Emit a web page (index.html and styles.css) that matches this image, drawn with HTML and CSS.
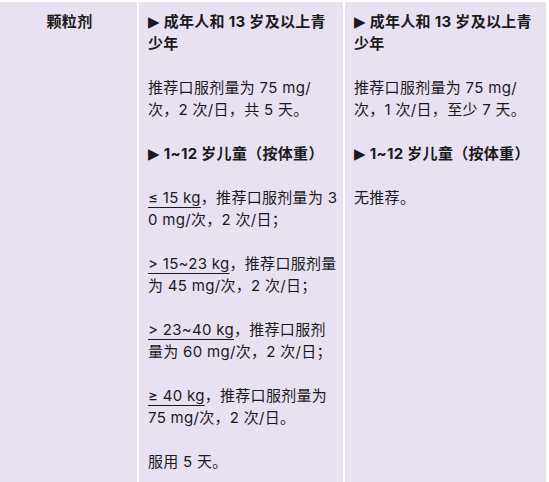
FILE: index.html
```html
<!DOCTYPE html>
<html lang="zh-CN">
<head>
<meta charset="utf-8">
<link rel="stylesheet" href="styles.css">
</head>
<body>
<div class="table">
  <div class="cell cell-name">
    <p class="b">颗粒剂</p>
  </div>
  <div class="cell">
    <p class="b"><span class="tri">▶</span> 成年人和 13 岁及以上青<br>少年</p>
    <p>推荐口服剂量为 75 mg/<br>次，2 次/日，共 5 天。</p>
    <p class="b"><span class="tri">▶</span> 1~12 岁儿童（按体重）</p>
    <p><span class="u">≤ 15 kg</span>，推荐口服剂量为 3<br>0 mg/次，2 次/日；</p>
    <p><span class="u">&gt; 15~23 kg</span>，推荐口服剂量<br>为 45 mg/次，2 次/日；</p>
    <p><span class="u">&gt; 23~40 kg</span>，推荐口服剂<br>量为 60 mg/次，2 次/日；</p>
    <p><span class="u">≥ 40 kg</span>，推荐口服剂量为<br>75 mg/次，2 次/日。</p>
    <p>服用 5 天。</p>
  </div>
  <div class="cell">
    <p class="b"><span class="tri">▶</span> 成年人和 13 岁及以上青<br>少年</p>
    <p>推荐口服剂量为 75 mg/<br>次，1 次/日，至少 7 天。</p>
    <p class="b"><span class="tri">▶</span> 1~12 岁儿童（按体重）</p>
    <p>无推荐。</p>
  </div>
</div>
</body>
</html>
```
FILE: styles.css
```css
html, body {
  margin: 0;
  padding: 0;
  background: #ffffff;
  height: 482px;
  overflow: hidden;
}
body {
  font-family: "Inter", "Noto Sans CJK SC", sans-serif;
  font-size: 15px;
  line-height: 22px;
  letter-spacing: 0.3px;
  color: #1a1a1a;
}
.table {
  display: grid;
  grid-template-columns: 137px 204px 201px;
  column-gap: 2px;
  padding: 2px 3px 0 0;
  height: 480px;
}
.cell {
  background: #e8e1f2;
  padding: 9px 2px 0 9px;
  white-space: nowrap;
}
.cell-name {
  text-align: center;
  padding-left: 4px;
}
.cell p {
  margin: 0 0 22px 0;
}
.b {
  font-weight: bold;
}
.tri {
  font-family: "DejaVu Sans", sans-serif;
  font-size: 15px;
}
.u {
  text-decoration: underline;
  text-underline-offset: 4px;
  text-decoration-thickness: 1px;
}
```
